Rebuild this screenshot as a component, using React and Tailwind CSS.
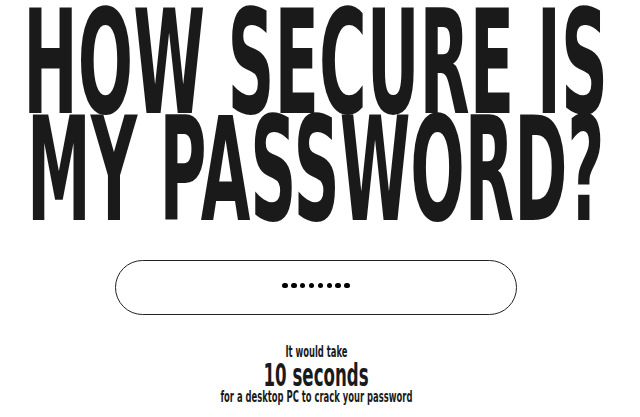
export default function App() {
  const dots = [0, 1, 2, 3, 4, 5, 6, 7];

  return (
    <div className="w-[632px] min-h-[417px] overflow-hidden bg-white pt-[10px] text-[#1a1a1a] font-['DejaVu_Sans',sans-serif] font-bold">
      {/* Heading */}
      <h1 className="text-[144px] leading-[107px]">
        <div className="flex justify-center whitespace-nowrap">
          <span className="inline-block scale-x-[0.452]">HOW SECURE IS</span>
        </div>
        <div className="flex justify-center whitespace-nowrap">
          <span className="inline-block scale-x-[0.445]">MY PASSWORD?</span>
        </div>
      </h1>

      {/* Password field */}
      <div className="mx-auto mt-[36px] flex h-[55px] w-[402px] items-center justify-center rounded-full border-[1.5px] border-[#222]">
        <div className="flex gap-[3.4px] pb-[4px]">
          {dots.map((d) => (
            <span key={d} className="size-[5.5px] rounded-full bg-black" />
          ))}
        </div>
      </div>

      {/* Result */}
      <div className="mt-[30px] flex flex-col items-center">
        <div className="flex w-full justify-center whitespace-nowrap text-[15px] leading-[15px]">
          <span className="inline-block scale-x-[0.56]">It would take</span>
        </div>
        <div className="flex w-full justify-center whitespace-nowrap text-[32px] leading-[30px]">
          <span className="inline-block scale-x-[0.52]">10 seconds</span>
        </div>
        <div className="flex w-full justify-center whitespace-nowrap text-[15px] leading-[15px]">
          <span className="inline-block scale-x-[0.56]">for a desktop PC to crack your password</span>
        </div>
      </div>
    </div>
  );
}
